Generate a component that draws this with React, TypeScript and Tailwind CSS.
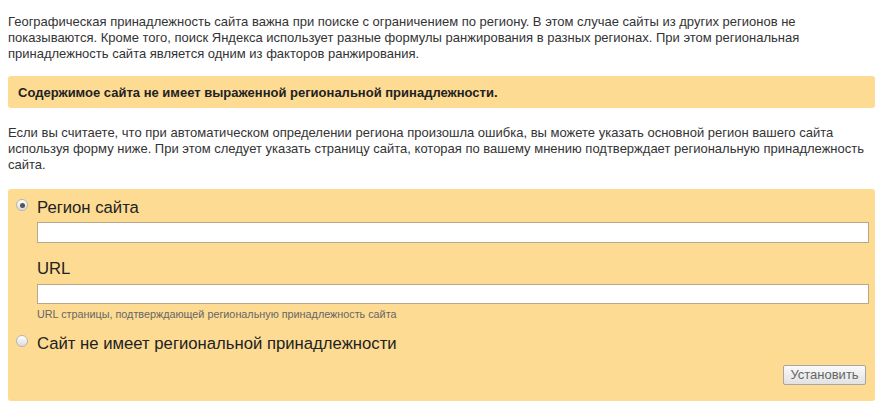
// Региональная принадлежность сайта — notice, explanation and the region form.

function Radio({ checked }: { checked?: boolean }) {
  return (
    <span className="grid place-items-center w-[12px] h-[12px] rounded-full border border-[#b5b5b5] bg-gradient-to-b from-[#ffffff] to-[#dcdcdc] shrink-0">
      {checked && <span className="w-[5px] h-[5px] rounded-full bg-[#555]" />}
    </span>
  );
}

export default function App() {
  return (
    <div className="w-[887px] h-[415px] bg-white px-[8px] pt-[14px] text-[#333] [font-family:'Liberation_Sans',Arial,sans-serif] overflow-hidden">
      <p className="text-[13px] leading-[16px] pr-[10px]">
        Географическая принадлежность сайта важна при поиске с ограничением по региону. В этом случае сайты из других регионов не
        показываются. Кроме того, поиск Яндекса использует разные формулы ранжирования в разных регионах. При этом региональная
        принадлежность сайта является одним из факторов ранжирования.
      </p>

      <div className="mt-[14px] w-[867px] rounded-[3px] bg-[#fddb93] px-[10px] pt-[9px] pb-[8px] text-[13px] leading-[15px] font-bold text-[#222]">
        Содержимое сайта не имеет выраженной региональной принадлежности.
      </div>

      <p className="mt-[17px] text-[13px] leading-[16px]">
        Если вы считаете, что при автоматическом определении региона произошла ошибка, вы можете указать основной регион вашего сайта
        используя форму ниже. При этом следует указать страницу сайта, которая по вашему мнению подтверждает региональную принадлежность
        сайта.
      </p>

      <div className="mt-[16px] w-[867px] rounded-[3px] bg-[#fddb93] pl-[8px] pr-[6px] pt-[8px] pb-[16px] text-[#222]">
        <div className="flex items-center gap-[9px] text-[16.7px] leading-[22px]">
          <span className="-mt-[6px]"><Radio checked /></span>
          <span>Регион сайта</span>
        </div>
        <div className="ml-[21px] mt-[3px] h-[21px] border border-[#b8a887] bg-white" />

        <div className="ml-[21px] mt-[15px] text-[16.7px] leading-[22px]">URL</div>
        <div className="ml-[21px] mt-[4px] h-[20px] border border-[#b8a887] bg-white" />
        <div className="ml-[21px] mt-[3px] text-[10.8px] leading-[14px] text-[#666]">
          URL страницы, подтверждающей региональную принадлежность сайта
        </div>

        <div className="mt-[12px] flex items-center gap-[9px] text-[16.7px] leading-[22px]">
          <span className="-mt-[6px]"><Radio /></span>
          <span>Сайт не имеет региональной принадлежности</span>
        </div>

        <div className="mt-[10px] flex justify-end pr-[3px]">
          <button className="h-[20px] w-[83px] rounded-[2px] border border-[#a6a6a6] bg-gradient-to-b from-[#fafafa] to-[#e2e2e2] text-[13px] leading-[18px] text-[#666]">
            Установить
          </button>
        </div>
      </div>
    </div>
  );
}
